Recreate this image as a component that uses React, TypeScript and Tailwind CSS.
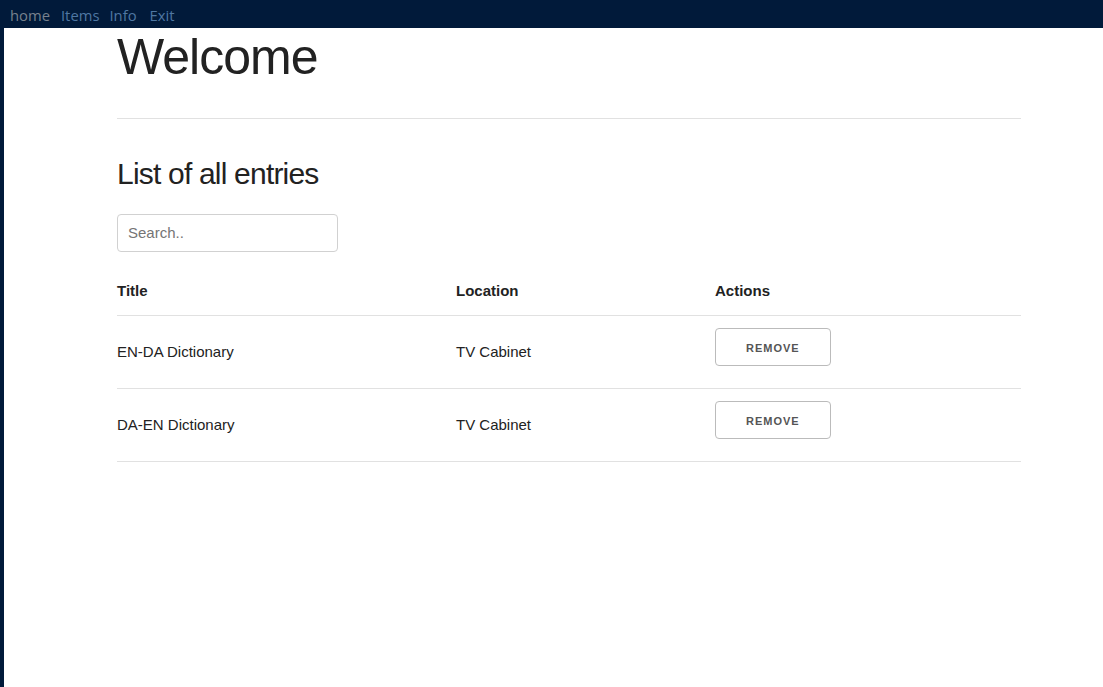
import { useState } from "react";

const entries = [
  { title: "EN-DA Dictionary", location: "TV Cabinet" },
  { title: "DA-EN Dictionary", location: "TV Cabinet" },
];

const navLinks = [
  { label: "home", className: "text-[#77818d]" },
  { label: "Items", className: "ml-[11px] text-[#4f77a2]" },
  { label: "Info", className: "ml-[10px] text-[#4f77a2]" },
  { label: "Exit", className: "ml-[13px] text-[#4f77a2]" },
];

const App = () => {
  const [query, setQuery] = useState("");
  const shown = entries.filter((e) =>
    e.title.toLowerCase().includes(query.toLowerCase())
  );

  return (
    <div className="flex min-h-[687px] bg-white text-[#222] font-['Liberation_Sans',Arial,sans-serif]">
      {/* left stripe */}
      <div className="w-[4px] shrink-0 bg-[#011a3a]" />

      <div className="flex-1 flex flex-col">
        {/* Top nav */}
        <nav className="-ml-[4px] h-[28px] bg-[#011a3a] flex pl-[10px] pt-[2px] text-[14.8px] leading-[26px] font-['Open_Sans',sans-serif]">
          {navLinks.map((link) => (
            <a key={link.label} href="#" className={link.className}>
              {link.label}
            </a>
          ))}
        </nav>

        {/* Main content */}
        <main className="ml-[113px] w-[904px]">
          <h1 className="-mt-[1px] text-[50px] leading-[60px] font-light tracking-[-1px]">
            Welcome
          </h1>
          <hr className="mt-[31px] border-0 border-t border-[#e1e1e1]" />

          <h4 className="mt-[35px] text-[30px] leading-[40.5px] font-light tracking-[-0.8px]">
            List of all entries
          </h4>

          <input
            type="text"
            placeholder="Search.."
            value={query}
            onChange={(e) => setQuery(e.target.value)}
            className="mt-[19px] mb-[15px] block h-[38px] w-[221px] rounded-[4px] border border-[#d1d1d1] px-[10px] py-[6px] text-[15px] placeholder:text-[#757575] outline-none"
          />

          <table className="w-full table-fixed text-[15px] leading-[24px]">
            <thead>
              <tr>
                <th className="w-[324px] border-b border-[#e1e1e1] py-[12px] pr-[15px] text-left font-bold">
                  Title
                </th>
                <th className="w-[259px] border-b border-[#e1e1e1] px-[15px] py-[12px] text-left font-bold">
                  Location
                </th>
                <th className="border-b border-[#e1e1e1] px-[15px] py-[12px] text-left font-bold">
                  Actions
                </th>
              </tr>
            </thead>
            <tbody>
              {shown.map((entry, index) => (
                <tr key={index}>
                  <td className="border-b border-[#e1e1e1] py-[12px] pr-[15px]">
                    {entry.title}
                  </td>
                  <td className="border-b border-[#e1e1e1] px-[15px] py-[12px]">
                    {entry.location}
                  </td>
                  <td className="border-b border-[#e1e1e1] px-[15px] py-[12px]">
                    <button className="mb-[10px] block h-[38px] rounded-[4px] border border-[#bbb] px-[30px] text-[11px] font-semibold uppercase leading-[38px] tracking-[1px] text-[#555]">
                      Remove
                    </button>
                  </td>
                </tr>
              ))}
            </tbody>
          </table>
        </main>
      </div>
    </div>
  );
};

export default App;
